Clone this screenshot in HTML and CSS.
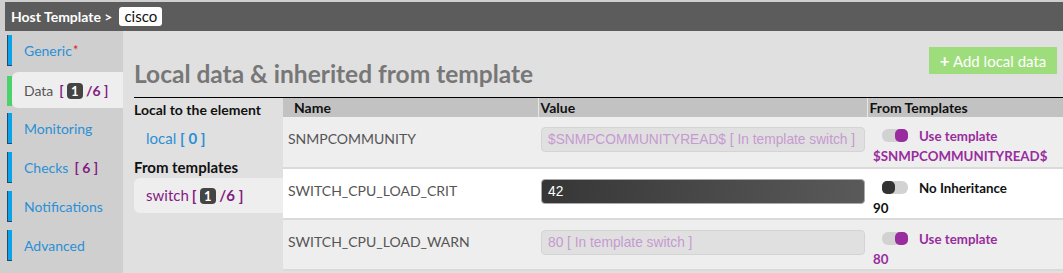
FILE: index.html
```html
<!DOCTYPE html>
<html lang="en">
<head>
    <meta charset="UTF-8">
    <title>Host Template - cisco</title>
    <link rel="stylesheet" href="styles.css">
</head>
<body>
    <div class="topbar">
        <span class="crumb">Host Template &gt;</span>
        <span class="crumb-name">cisco</span>
    </div>

    <div class="page">
        <nav class="tabs">
            <a class="tab"><span class="tab-label">Generic<span class="required">*</span></span></a>
            <a class="tab active"><span class="tab-label">Data <span class="count">[ <span class="badge">1</span> /6 ]</span></span></a>
            <a class="tab"><span class="tab-label">Monitoring</span></a>
            <a class="tab"><span class="tab-label">Checks <span class="count">[ 6 ]</span></span></a>
            <a class="tab"><span class="tab-label">Notifications</span></a>
            <a class="tab"><span class="tab-label">Advanced</span></a>
        </nav>

        <main class="content">
            <div class="content-head">
                <h1>Local data &amp; inherited from template</h1>
                <button class="add-btn"><span class="plus">+</span> Add local data</button>
            </div>

            <div class="data-body">
                <aside class="sources">
                    <h3>Local to the element</h3>
                    <div class="source local">local <span class="count">[ 0 ]</span></div>
                    <h3 class="from-title">From templates</h3>
                    <div class="source tpl active">switch<span class="count">[ <span class="badge">1</span> /6 ]</span></div>
                </aside>

                <table class="data-table">
                    <colgroup>
                        <col class="col-name">
                        <col class="col-value">
                        <col class="col-from">
                    </colgroup>
                    <thead>
                        <tr>
                            <th class="th-name">Name</th>
                            <th>Value</th>
                            <th>From Templates</th>
                        </tr>
                    </thead>
                    <tbody>
                        <tr class="inherited">
                            <td class="name">SNMPCOMMUNITY</td>
                            <td><div class="value">$SNMPCOMMUNITYREAD$ [ In template switch ]</div></td>
                            <td class="from">
                                <span class="toggle on"></span><span class="from-label">Use template</span><br>
                                <span class="from-value">$SNMPCOMMUNITYREAD$</span>
                            </td>
                        </tr>
                        <tr class="local">
                            <td class="name">SWITCH_CPU_LOAD_CRIT</td>
                            <td><div class="value">42</div></td>
                            <td class="from">
                                <span class="toggle"></span><span class="from-label">No Inheritance</span><br>
                                <span class="from-value">90</span>
                            </td>
                        </tr>
                        <tr class="inherited">
                            <td class="name">SWITCH_CPU_LOAD_WARN</td>
                            <td><div class="value">80 [ In template switch ]</div></td>
                            <td class="from">
                                <span class="toggle on"></span><span class="from-label">Use template</span><br>
                                <span class="from-value">80</span>
                            </td>
                        </tr>
                    </tbody>
                </table>
            </div>
        </main>
    </div>
</body>
</html>
```

FILE: styles.css
```css
body {
    margin: 0;
    font-family: Lato, "Open Sans", sans-serif;
    font-size: 14px;
    background-color: #cfcfcf;
    color: #555;
    height: 273px;
    overflow: hidden;
}

/* top breadcrumb bar */
.topbar {
    margin: 2px 0 0 5px;
    height: 29px;
    background-color: #5c5c5c;
    display: flex;
    align-items: center;
    padding-left: 6px;
    color: white;
    font-weight: bold;
    font-size: 14px;
}

.crumb-name {
    margin-left: 7px;
    background: white;
    color: #111;
    font-weight: normal;
    font-size: 15px;
    line-height: 19px;
    padding: 0 5px;
    border-radius: 3px;
}

.page {
    display: flex;
    height: 242px;
}

/* left tabs */
.tabs {
    width: 123px;
    padding-top: 4px;
}

.tab {
    display: flex;
    height: 31px;
    margin: 0 0 8px 7px;
    color: #2b8fd6;
    font-size: 14px;
}

.tab::before {
    content: '';
    width: 4px;
    background-color: #0aa3ea;
    border-left: 1px solid #2b4a60;
    border-bottom: 1px solid #2b4a60;
}

.tab-label {
    flex: 1;
    display: flex;
    align-items: center;
    padding-left: 12px;
}

.tab.active {
    color: #555;
}

.tab.active::before {
    background-color: #4cd26a;
    border-color: #4cd26a;
    margin: 2px 0 -1px;
}

.tab.active .tab-label {
    background-color: #eeeeee;
    margin: -2px 0 -3px;
    border-radius: 6px 0 0 6px;
}

.required {
    color: #e0202a;
    font-size: 13px;
    align-self: flex-start;
    margin: 7px 0 0 1px;
}

.count {
    color: #841a84;
    font-weight: bold;
    margin-left: 6px;
    white-space: pre;
}

.source .count {
    margin-left: 0;
}

.source.tpl .count {
    margin-left: 3px;
}

.local .count {
    color: #2b8fd6;
}

.badge {
    display: inline-block;
    background-color: #444;
    color: white;
    border-radius: 4px;
    padding: 0 4px;
    font-size: 13px;
    line-height: 16px;
}

/* main content */
.content {
    flex: 1;
    background-color: #e0e0e0;
    padding: 16px 0 0 11px;
}

.content-head {
    display: flex;
    justify-content: space-between;
    align-items: flex-start;
    height: 50px;
    border-bottom: 1px solid #000;
    padding-right: 6px;
}

h1 {
    margin: 12px 0 0;
    font-size: 24.5px;
    color: #777;
}

.add-btn {
    width: 128px;
    height: 27px;
    background-color: #9edd7b;
    color: white;
    border: none;
    font-family: inherit;
    font-size: 15px;
    padding: 0;
}

.plus {
    font-weight: bold;
    font-size: 17px;
}

.data-body {
    display: flex;
}

.sources {
    width: 149px;
}

.sources h3 {
    margin: 0;
    color: #111;
    font-size: 14px;
    line-height: 22px;
}

.sources h3:first-child {
    margin-top: 1px;
}

.sources .from-title {
    font-size: 15px;
}

.source {
    padding-left: 12px;
    height: 35px;
    line-height: 34px;
    color: #2b8fd6;
    font-size: 15px;
}

.source.tpl {
    color: #841a84;
    background-color: #eeeeee;
    border-radius: 6px 0 0 6px;
}

/* table */
.data-table {
    flex: 1;
    border-collapse: collapse;
    table-layout: fixed;
}

.col-name {
    width: 255px;
}

.col-value {
    width: 329px;
}

.data-table th {
    height: 19px;
    background-color: #c2c2c2;
    color: #111;
    text-align: left;
    padding: 0 2px;
    font-size: 14px;
    border-left: 1px solid #e6e6e6;
}

.data-table th:first-child {
    border-left: none;
}

.data-table .th-name {
    padding-left: 11px;
}

.data-table tbody tr {
    height: 51px;
}

.data-table td {
    vertical-align: top;
    padding: 0 2px;
    border-bottom: 2px solid #dadada;
}

.inherited td {
    background-color: #eeeeee;
}

.local td {
    background-color: white;
}

.data-table .name {
    padding: 13px 0 0 5px;
    font-size: 14px;
    color: #555;
}

.value {
    margin: 10px 0 0 1px;
    height: 25px;
    box-sizing: border-box;
    border: 1px solid #d4d4d4;
    border-radius: 4px;
    background-color: #e0e0e0;
    color: #c69ad0;
    font-family: "Liberation Sans", Arial, sans-serif;
    font-size: 13.75px;
    line-height: 23px;
    padding-left: 6px;
    white-space: nowrap;
    overflow: hidden;
}

.local .value {
    background: linear-gradient(100deg, #363636, #5a5a5a);
    border-color: #aaa;
    color: white;
}

.data-table .from {
    padding: 9px 0 0 6px;
    line-height: 20px;
    font-weight: bold;
    font-size: 13.3px;
}

.toggle {
    display: inline-block;
    vertical-align: -1px;
    width: 26px;
    height: 13px;
    margin: 0 11px 0 9px;
    border-radius: 6px;
    background: #d2d2d2;
    position: relative;
}

.toggle::after {
    content: '';
    position: absolute;
    left: 0;
    top: 0;
    width: 13px;
    height: 13px;
    border-radius: 5px;
    background-color: #333;
}

.toggle.on::after {
    left: 13px;
    background-color: #992c9e;
}

.from-label {
    color: #111;
}

.inherited .from-label,
.inherited .from-value {
    color: #992c9e;
}

.from-value {
    color: #111;
}
```
